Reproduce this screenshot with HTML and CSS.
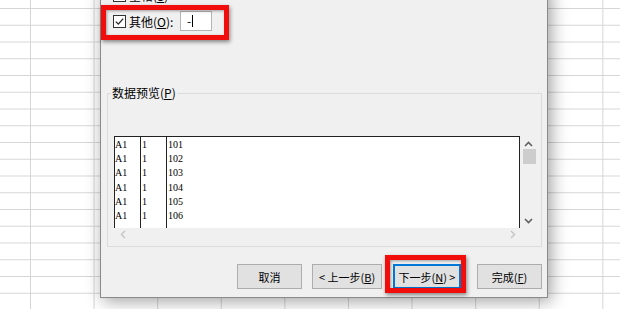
FILE: index.html
```html
<!DOCTYPE html>
<html lang="zh-CN">
<head>
<meta charset="UTF-8" />
<title>文本导入向导</title>
<link rel="stylesheet" href="styles.css">
</head>
<body>

<div class="sheet">
  <div class="dialog">
    <div class="opt opt-first">
      <svg class="check" width="13" height="13" viewBox="0 0 13 13"><rect x="0.5" y="0.5" width="12" height="12" fill="#fff" stroke="#333"/></svg>
      <span>空格(<u>S</u>)</span>
    </div>

    <div class="opt opt-other">
      <svg class="check" width="13" height="13" viewBox="0 0 13 13"><rect x="0.5" y="0.5" width="12" height="12" fill="#fff" stroke="#333"/><path d="M2.8 6.6 L5.3 9.1 L10.2 3.6" fill="none" stroke="#222" stroke-width="1.3"/></svg>
      <span class="opt-label">其他(<u>O</u>):</span>
      <div class="sep-input">-<span class="caret"></span></div>
      <div class="mark mark-other"></div>
    </div>

    <fieldset class="group">
      <legend>数据预览(<u>P</u>)</legend>
      <div class="preview">
        <div class="data">
          <div class="col col-a">
            <div>A1</div><div>A1</div><div>A1</div><div>A1</div><div>A1</div><div>A1</div>
          </div>
          <div class="col col-b">
            <div>1</div><div>1</div><div>1</div><div>1</div><div>1</div><div>1</div>
          </div>
          <div class="col col-c">
            <div>101</div><div>102</div><div>103</div><div>104</div><div>105</div><div>106</div>
          </div>
        </div>
        <div class="vscroll">
          <svg width="9" height="6" viewBox="0 0 9 6"><path d="M1 5 L4.5 1.5 L8 5" fill="none" stroke="#606060" stroke-width="1.6"/></svg>
          <div class="thumb"></div>
          <div class="vscroll-fill"></div>
          <svg width="9" height="6" viewBox="0 0 9 6"><path d="M1 1 L4.5 4.5 L8 1" fill="none" stroke="#606060" stroke-width="1.6"/></svg>
        </div>
        <div class="hscroll">
          <svg width="6" height="9" viewBox="0 0 6 9"><path d="M5 1 L1.5 4.5 L5 8" fill="none" stroke="#c4c4c4" stroke-width="1.4"/></svg>
          <svg width="6" height="9" viewBox="0 0 6 9"><path d="M1 1 L4.5 4.5 L1 8" fill="none" stroke="#c4c4c4" stroke-width="1.4"/></svg>
        </div>
        <div class="corner"></div>
      </div>
    </fieldset>

    <div class="buttons">
      <button class="btn btn-cancel">取消</button>
      <button class="btn btn-back">&lt; 上一步(<u>B</u>)</button>
      <button class="btn btn-next">下一步(<u>N</u>) &gt;<span class="mark mark-next"></span></button>
      <button class="btn btn-finish">完成(<u>F</u>)</button>
    </div>
  </div>
</div>

</body>
</html>
```

FILE: styles.css
```css
body {
  margin: 0;
  font-family: "Noto Sans CJK SC", "Noto Sans", sans-serif;
  font-size: 12px;
  color: #000;
}
.sheet {
  position: relative;
  width: 620px;
  height: 309px;
  overflow: hidden;
  background-color: #fff;
  background-image:
    linear-gradient(to right, #d6d6d6 1px, transparent 1px),
    linear-gradient(to bottom, #d6d6d6 1px, transparent 1px);
  background-size: 63.6px 100%, 100% 16.75px;
  background-position: 30px 0, 0 8px;
}
.dialog {
  position: absolute;
  left: 100px;
  top: -14px;
  width: 446px;
  padding-bottom: 8px;
  background: #f0f0f0;
  border: 1px solid #8a8a8a;
  box-shadow: 3px 3px 16px rgba(0, 0, 0, 0.38);
}
.opt {
  display: flex;
  align-items: center;
  gap: 3px;
  padding-left: 12px;
  line-height: 13px;
}
.opt-first {
  margin-top: 2px;
  height: 13px;
}
.opt-other {
  position: relative;
  margin-top: 9px;
  height: 20px;
}
.check {
  display: block;
  flex: none;
}
.opt-label {
  width: 48px;
}
.sep-input {
  display: flex;
  align-items: center;
  box-sizing: border-box;
  width: 32px;
  height: 20px;
  padding-left: 6px;
  background: #fff;
  border: 1px solid #b4b4b4;
  line-height: 14px;
}
.caret {
  display: inline-block;
  width: 1px;
  height: 12px;
  margin-left: 1px;
  background: #000;
}
.mark {
  position: absolute;
  box-sizing: border-box;
  border: 5px solid #f20d0d;
  box-shadow: 1px 2px 4px rgba(0, 0, 0, 0.45), inset 1px 1px 3px rgba(0, 0, 0, 0.35);
  pointer-events: none;
}
.mark-other {
  left: 0;
  top: -6px;
  width: 128px;
  height: 35px;
}
.group {
  margin: 54px 5px 0 6px;
  padding: 35px 4px 5px 6px;
  min-width: 0;
  border: 1px solid #dcdcdc;
}
.group legend {
  margin-left: -3px;
  padding: 0 1px;
  line-height: 16px;
}
.preview {
  display: grid;
  grid-template-columns: 1fr 17px;
  grid-template-rows: 92px 13px;
}
.data {
  display: flex;
  overflow: hidden;
  background: #fff;
  border: 1px solid #222;
  border-bottom: none;
  font-family: "Liberation Serif", serif;
  font-size: 10px;
  line-height: 14.2px;
}
.col {
  padding-top: 1px;
}
.col-a, .col-b {
  border-right: 1px solid #222;
}
.col-a {
  width: 25px;
}
.col-b {
  width: 24px;
  padding-left: 1px;
}
.col-c {
  padding-left: 1px;
}
.vscroll {
  display: flex;
  flex-direction: column;
  align-items: center;
  padding: 5px 0 4px;
}
.thumb {
  width: 13px;
  height: 15px;
  margin-top: 2px;
  margin-left: 1px;
  background: #cdcdcd;
}
.vscroll-fill {
  flex: 1;
}
.hscroll {
  display: flex;
  align-items: center;
  justify-content: space-between;
  padding: 0 4px 0 6px;
}
.buttons {
  display: flex;
  justify-content: flex-end;
  margin: 17px 5px 0 0;
}
.btn {
  position: relative;
  height: 25px;
  padding: 0;
  background: #e1e1e1;
  border: 1px solid #adadad;
  font-family: "Noto Sans CJK SC", "Noto Sans", sans-serif;
  font-size: 11px;
  color: #000;
  white-space: nowrap;
}
.btn-cancel {
  width: 65px;
}
.btn-back {
  width: 70px;
  margin-left: 10px;
}
.btn-next {
  width: 68px;
  margin-left: 11px;
  border: 2px solid #0078d7;
}
.btn-finish {
  width: 65px;
  margin-left: 16px;
}
.mark-next {
  left: -10px;
  top: -11px;
  width: 81px;
  height: 38px;
}
```
